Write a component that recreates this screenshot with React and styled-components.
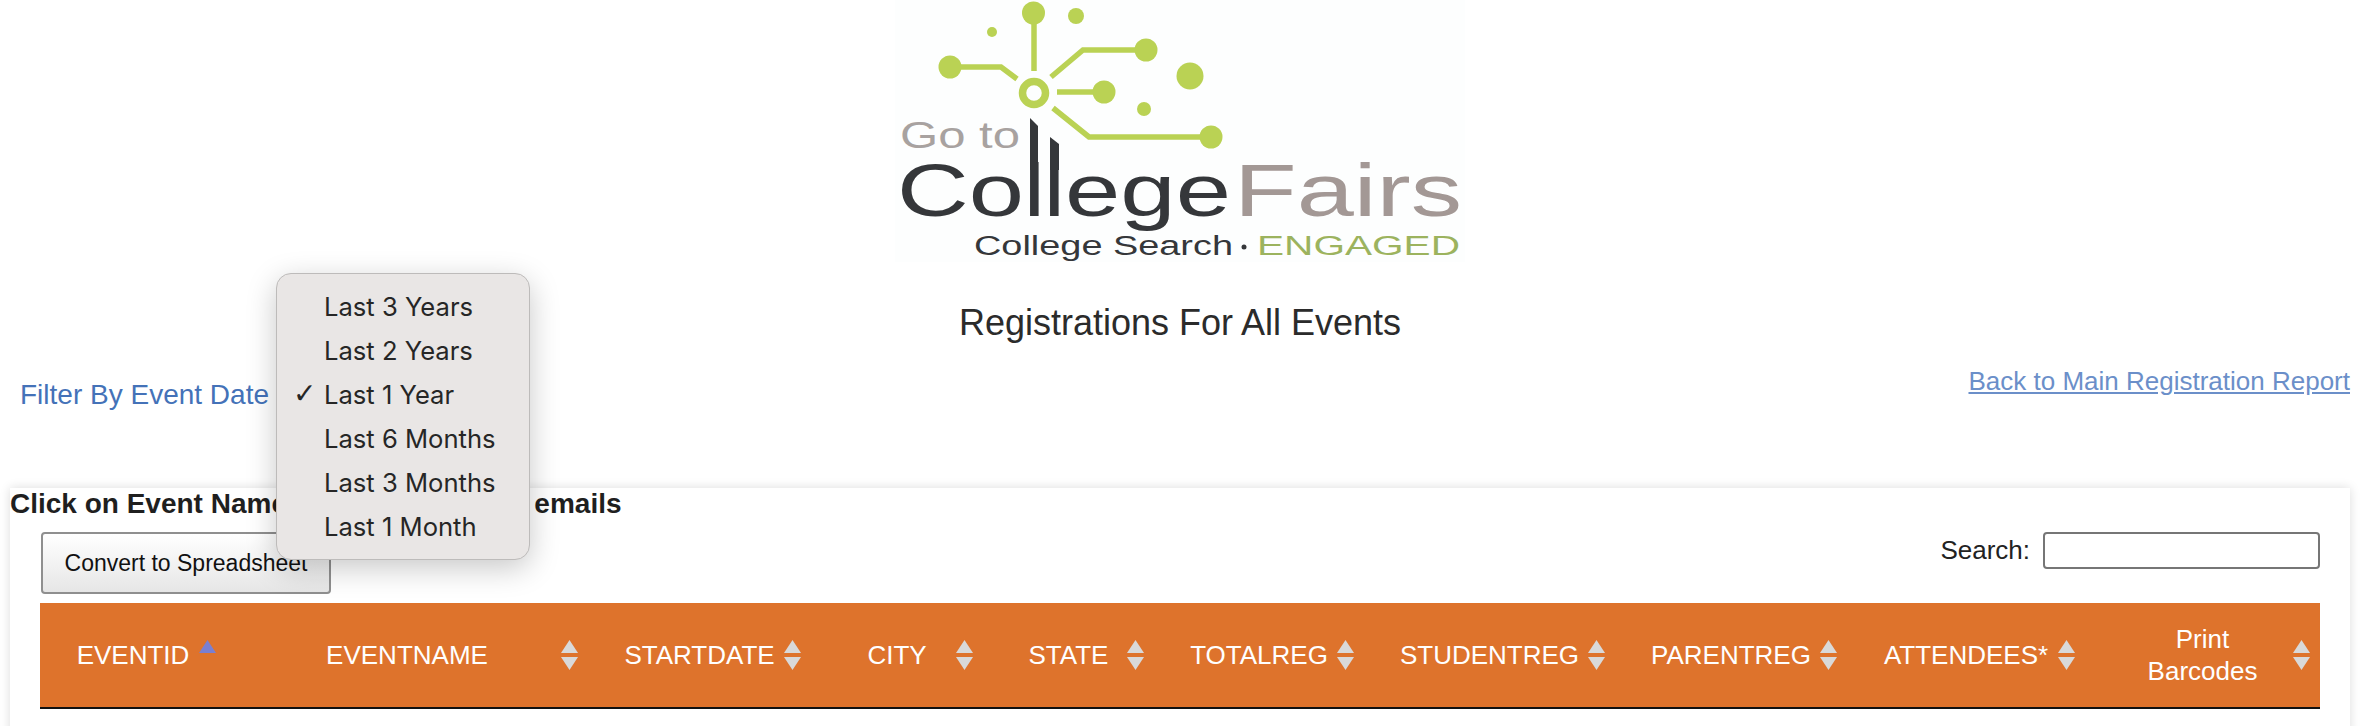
import React from 'react';
import styled, {createGlobalStyle} from 'styled-components';

const columns = [
    {label: 'EVENTID', width: 186, sort: 'asc'},
    {label: 'EVENTNAME', width: 362},
    {label: 'STARTDATE', width: 223},
    {label: 'CITY', width: 172},
    {label: 'STATE', width: 171},
    {label: 'TOTALREG', width: 210},
    {label: 'STUDENTREG', width: 251},
    {label: 'PARENTREG', width: 232},
    {label: 'ATTENDEES*', width: 238},
    {label: <>Print<br/>Barcodes</>, width: 235},
];

const ranges = ['Last 3 Years', 'Last 2 Years', 'Last 1 Year', 'Last 6 Months', 'Last 3 Months', 'Last 1 Month'];

const Logo = () => (
    <LogoSvg viewBox="895 0 570 262" width="570" height="262">
        <rect x="895" y="0" width="570" height="262" fill="#fdfefe"/>
        <g fill="#bad254">
            <circle cx="1033.5" cy="13" r="11.5"/>
            <circle cx="1076" cy="16" r="8"/>
            <circle cx="992" cy="32" r="5"/>
            <circle cx="950" cy="67" r="11.5"/>
            <circle cx="1146" cy="50" r="11.5"/>
            <circle cx="1190" cy="76" r="13.5"/>
            <circle cx="1104" cy="92" r="11.5"/>
            <circle cx="1144" cy="109" r="7"/>
            <circle cx="1211" cy="137" r="11.5"/>
        </g>
        <g fill="none" stroke="#bad254" strokeWidth="5.5">
            <path d="M1034 13V71"/>
            <path d="M950 67H1001L1017 79"/>
            <path d="M1051 77L1083 50H1146"/>
            <path d="M1057 92H1104"/>
            <path d="M1053 108L1089 137H1211"/>
            <circle cx="1034" cy="93" r="11.5" strokeWidth="7.5"/>
        </g>
        <g fill="#35373a">
            <polygon points="1030,118 1038,126 1038,170 1030,170"/>
            <polygon points="1050,137 1059,144 1059,170 1050,170"/>
        </g>
        <LogoText x="900" y="148" fontSize="36" textLength="120" fill="#a8a2a0">Go to</LogoText>
        <LogoText x="897" y="216" fontSize="75" textLength="127" fill="#35373a">Co</LogoText>
        <LogoText x="1023.5" y="216" fontSize="75" textLength="21.6" fill="#35373a">l</LogoText>
        <LogoText x="1043.5" y="216" fontSize="75" textLength="21.6" fill="#35373a">l</LogoText>
        <LogoText x="1065" y="216" fontSize="75" textLength="166" fill="#35373a">ege</LogoText>
        <LogoText x="1234" y="216" fontSize="75" textLength="228" fill="#a39895">Fairs</LogoText>
        <LogoText x="974" y="255" fontSize="27" textLength="259" fill="#35373a">College Search</LogoText>
        <circle cx="1244" cy="247" r="2.5" fill="#35373a"/>
        <LogoText x="1257" y="255" fontSize="27" textLength="203" fill="#9cb35e">ENGAGED</LogoText>
    </LogoSvg>
);

const SortIcon = ({sort}) => (
    <SortSvg viewBox="0 0 17 30" width="17" height="30">
        <polygon points="8.5,0 17,13 0,13" fill={sort ? '#7a7fd0' : '#d9d9d9'}/>
        {!sort && <polygon points="0,17 17,17 8.5,30" fill="#d9d9d9"/>}
    </SortSvg>
);

const App = () => (
    <Page>
        <GlobalStyle/>
        <LogoWrap><Logo/></LogoWrap>
        <Title>Registrations For All Events</Title>
        <FilterRow>
            <FilterLabel>Filter By Event Date</FilterLabel>
            <BackLink href="#">Back to Main Registration Report</BackLink>
        </FilterRow>
        <Card>
            <Hint>Click on Event Name to view registrant emails</Hint>
            <Toolbar>
                <ExportButton>Convert to Spreadsheet</ExportButton>
                <SearchLabel>
                    Search:
                    <SearchInput type="search"/>
                </SearchLabel>
            </Toolbar>
            <Table>
                <colgroup>
                    {columns.map((col, key) => <col key={key} style={{width: col.width}}/>)}
                </colgroup>
                <thead>
                    <tr>
                        {columns.map((col, key) => (
                            <HeadCell key={key}>
                                {col.label}
                                <SortIcon sort={col.sort}/>
                            </HeadCell>
                        ))}
                    </tr>
                </thead>
            </Table>
        </Card>
        <Menu>
            {ranges.map(item => (
                <MenuItem key={item}>
                    <Check>{item === 'Last 1 Year' ? '✓' : ''}</Check>
                    {item}
                </MenuItem>
            ))}
        </Menu>
    </Page>
);

const GlobalStyle = createGlobalStyle`
    html, body {
        margin: 0;
        background: #fff;
    }
    body {
        font-family: "Liberation Sans", Arial, sans-serif;
        color: #222;
    }
`;

const Page = styled.div`
    position: relative;
    height: 726px;
    overflow: hidden;
`;

const LogoWrap = styled.div`
    display: flex;
    justify-content: center;
    padding-right: 10px;
`;

const LogoSvg = styled.svg`
    display: block;
`;

const LogoText = styled.text.attrs({lengthAdjust: 'spacingAndGlyphs'})`
    font-family: "Liberation Sans", Arial, sans-serif;
`;

const Title = styled.h1`
    margin: 42px 10px 0 0;
    text-align: center;
    font-size: 36px;
    line-height: 37px;
    font-weight: 400;
    color: #2b2b2b;
`;

const FilterRow = styled.div`
    display: flex;
    justify-content: space-between;
    align-items: flex-start;
    height: 127px;
    padding: 20px 20px 0 20px;
`;

const FilterLabel = styled.div`
    margin-top: 18px;
    font-size: 28px;
    line-height: 32px;
    color: #4472b8;
`;

const BackLink = styled.a`
    margin-top: 5px;
    font-size: 26px;
    line-height: 30px;
    color: #6b8fc9;
    text-decoration: underline;
`;

const Card = styled.section`
    margin: 0 20px 0 10px;
    height: 300px;
    padding: 0 30px 0 30px;
    background: #fff;
    box-shadow: 0 0 10px rgba(0, 0, 0, .14);
`;

const Hint = styled.div`
    margin: 0 0 0 -30px;
    font-size: 28px;
    line-height: 32px;
    font-weight: 700;
    color: #1f1f1f;
`;

const Toolbar = styled.div`
    display: flex;
    justify-content: space-between;
    align-items: flex-start;
    height: 83px;
    padding-top: 12px;
    box-sizing: border-box;
`;

const ExportButton = styled.button`
    width: 290px;
    height: 62px;
    padding: 0;
    margin-left: 1px;
    border: 2px solid #8f8f8f;
    border-radius: 4px;
    background: linear-gradient(#fff, #e6e6e6);
    font-family: "Liberation Sans", Arial, sans-serif;
    font-size: 23px;
    color: #111;
`;

const SearchLabel = styled.label`
    display: flex;
    align-items: center;
    gap: 13px;
    font-size: 26px;
    color: #222;
`;

const SearchInput = styled.input`
    width: 277px;
    height: 37px;
    padding: 0;
    box-sizing: border-box;
    border: 2px solid #767676;
    border-radius: 4px;
    background: #fff;
`;

const Table = styled.table`
    table-layout: fixed;
    width: 2280px;
    border-collapse: collapse;
    border-bottom: 2px solid #111;
`;

const HeadCell = styled.th`
    position: relative;
    height: 104px;
    padding: 0;
    background: #de732c;
    color: #fff;
    font-size: 26px;
    line-height: 32px;
    font-weight: 400;
    text-align: center;
    vertical-align: middle;
`;

const SortSvg = styled.svg`
    position: absolute;
    right: 10px;
    top: 37px;
`;

const Menu = styled.ul`
    position: absolute;
    left: 276px;
    top: 273px;
    width: 254px;
    margin: 0;
    padding: 10px 0 11px;
    box-sizing: border-box;
    list-style: none;
    background: #e9e6e5;
    border: 1px solid #bdbbba;
    border-radius: 15px;
    box-shadow: 0 8px 30px rgba(0, 0, 0, .22);
`;

const MenuItem = styled.li`
    display: flex;
    align-items: center;
    height: 44px;
    font-family: Inter, "Liberation Sans", sans-serif;
    font-size: 25.6px;
    color: #262626;
`;

const Check = styled.span`
    width: 47px;
    padding-left: 16px;
    box-sizing: border-box;
    font-family: "DejaVu Sans", sans-serif;
    font-size: 28px;
    font-weight: 700;
    line-height: 1;
`;

export default App;
